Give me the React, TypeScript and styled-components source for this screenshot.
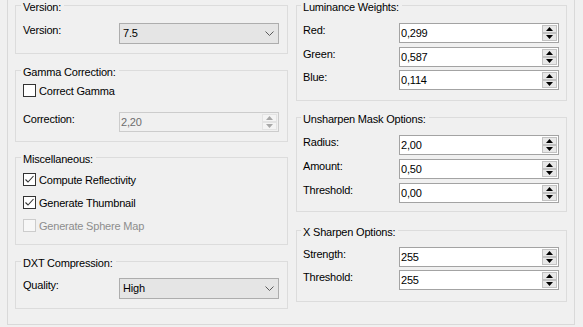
import React from 'react';
import styled, { createGlobalStyle } from 'styled-components';

const Global = createGlobalStyle`
  html, body { margin: 0; padding: 0; background: #f0f0f0; }
  body {
    font-family: "Liberation Sans", Arial, sans-serif;
    font-size: 11px;
    letter-spacing: -0.2px;
    color: #000;
  }
`;

const Page = styled.div`
  width: 583px;
  height: 327px;
  overflow: hidden;
  background: #f0f0f0;
`;

const Panel = styled.div`
  margin-left: 7px;
  width: 568px;
  height: 325px;
  box-sizing: border-box;
  border: 1px solid #d9d9d9;
  border-top: none;
  padding: 5px 7px 0 7px;
  display: grid;
  grid-template-columns: 273px 271px;
  column-gap: 8px;
  align-items: start;
`;

const Column = styled.div`
  display: flex;
  flex-direction: column;
`;

const Group = styled.section<{ $mt: number; $pb: number; $px: number }>`
  margin-top: ${p => p.$mt}px;
  border: 1px solid #dcdcdc;
  padding: 0 ${p => p.$px}px ${p => p.$pb}px;
  display: flex;
  flex-direction: column;
`;

const Legend = styled.div`
  align-self: flex-start;
  margin: -6px 0 0 -2px;
  padding: 0 3px 0 2px;
  background: #f0f0f0;
  height: 15px;
  line-height: 14px;
  white-space: nowrap;
`;

const Stack = styled.div<{ $mt: number; $gap: number }>`
  margin-top: ${p => p.$mt}px;
  display: flex;
  flex-direction: column;
  gap: ${p => p.$gap}px;
`;

const Row = styled.div`
  display: grid;
  grid-template-columns: 96px 160px;
  align-items: start;
`;

const Label = styled.div`
  line-height: 14px;
  white-space: nowrap;
`;

const Combo = styled.div`
  box-sizing: border-box;
  height: 21px;
  border: 1px solid #adadad;
  background: #e5e5e5;
  display: flex;
  align-items: center;
  justify-content: space-between;
  padding: 0 4px 0 3px;
  line-height: 19px;
`;

const SpinBox = styled.div<{ $disabled?: boolean }>`
  box-sizing: border-box;
  height: 20px;
  border: 1px solid ${p => (p.$disabled ? '#cccccc' : '#a3a3a3')};
  background: ${p => (p.$disabled ? '#f0f0f0' : '#ffffff')};
  color: ${p => (p.$disabled ? '#6d6d6d' : '#000')};
  display: flex;
  align-items: stretch;
`;

const SpinValue = styled.div`
  flex: 1;
  padding-left: 1px;
  line-height: 18px;
`;

const SpinButtons = styled.div`
  width: 15px;
  padding: 1px 1px 1px 0;
  display: flex;
  flex-direction: column;
`;

const SpinButton = styled.div<{ $disabled?: boolean }>`
  flex: 1;
  box-sizing: border-box;
  border: 1px solid ${p => (p.$disabled ? '#e3e3e3' : '#c2c2c2')};
  background: ${p => (p.$disabled ? '#f4f4f4' : '#e8e8e8')};
  display: flex;
  align-items: center;
  justify-content: center;
`;

const CheckRow = styled.div<{ $disabled?: boolean }>`
  height: 17px;
  display: flex;
  align-items: center;
  gap: 3px;
  line-height: 14px;
  color: ${p => (p.$disabled ? '#8d8d8d' : '#000')};
  white-space: nowrap;
`;

const Box = styled.div<{ $disabled?: boolean }>`
  box-sizing: border-box;
  width: 13px;
  height: 13px;
  border: 1px solid ${p => (p.$disabled ? '#cccccc' : '#333333')};
  background: ${p => (p.$disabled ? '#f7f7f7' : '#ffffff')};
  display: flex;
  align-items: center;
  justify-content: center;
`;

const Chevron = () => (
  <svg width="9" height="5" viewBox="0 0 9 5">
    <polyline points="0.5,0.5 4.5,4.5 8.5,0.5" fill="none" stroke="#5a5a5a" strokeWidth="1" />
  </svg>
);

const Arrow = ({ up, color }: { up?: boolean; color: string }) => (
  <svg width="7" height="4" viewBox="0 0 7 4">
    <polygon points={up ? '0,4 3.5,0 7,4' : '0,0 7,0 3.5,4'} fill={color} />
  </svg>
);

const Check = () => (
  <svg width="11" height="11" viewBox="0 0 11 11">
    <polyline points="1.5,5.5 4,8 9.5,2" fill="none" stroke="#333" strokeWidth="1.1" />
  </svg>
);

function Spin({ value, disabled }: { value: string; disabled?: boolean }) {
  const c = disabled ? '#a8a8a8' : '#000';
  return (
    <SpinBox $disabled={disabled}>
      <SpinValue>{value}</SpinValue>
      <SpinButtons>
        <SpinButton $disabled={disabled}><Arrow up color={c} /></SpinButton>
        <SpinButton $disabled={disabled}><Arrow color={c} /></SpinButton>
      </SpinButtons>
    </SpinBox>
  );
}

function CheckItem({ label, checked, disabled }: { label: string; checked?: boolean; disabled?: boolean }) {
  return (
    <CheckRow $disabled={disabled}>
      <Box $disabled={disabled}>{checked && <Check />}</Box>
      <span>{label}</span>
    </CheckRow>
  );
}

function SpinRow({ label, value, disabled }: { label: string; value: string; disabled?: boolean }) {
  return (
    <Row>
      <Label>{label}</Label>
      <Spin value={value} disabled={disabled} />
    </Row>
  );
}

function ComboRow({ label, value }: { label: string; value: string }) {
  return (
    <Row>
      <Label>{label}</Label>
      <Combo>
        <span>{value}</span>
        <Chevron />
      </Combo>
    </Row>
  );
}

export default function App() {
  return (
    <Page>
      <Global />
      <Panel>
        <Column>
          <Group $mt={0} $pb={9} $px={7}>
            <Legend>Version:</Legend>
            <Stack $mt={8} $gap={0}>
              <ComboRow label="Version:" value="7.5" />
            </Stack>
          </Group>
          <Group $mt={16} $pb={9} $px={7}>
            <Legend>Gamma Correction:</Legend>
            <Stack $mt={2} $gap={13}>
              <CheckItem label="Correct Gamma" />
              <SpinRow label="Correction:" value="2,20" disabled />
            </Stack>
          </Group>
          <Group $mt={15} $pb={10} $px={7}>
            <Legend>Miscellaneous:</Legend>
            <Stack $mt={4} $gap={6}>
              <CheckItem label="Compute Reflectivity" checked />
              <CheckItem label="Generate Thumbnail" checked />
              <CheckItem label="Generate Sphere Map" disabled />
            </Stack>
          </Group>
          <Group $mt={16} $pb={9} $px={7}>
            <Legend>DXT Compression:</Legend>
            <Stack $mt={7} $gap={0}>
              <ComboRow label="Quality:" value="High" />
            </Stack>
          </Group>
        </Column>
        <Column>
          <Group $mt={0} $pb={10} $px={6}>
            <Legend>Luminance Weights:</Legend>
            <Stack $mt={8} $gap={3.5}>
              <SpinRow label="Red:" value="0,299" />
              <SpinRow label="Green:" value="0,587" />
              <SpinRow label="Blue:" value="0,114" />
            </Stack>
          </Group>
          <Group $mt={16} $pb={8} $px={6}>
            <Legend>Unsharpen Mask Options:</Legend>
            <Stack $mt={8} $gap={4}>
              <SpinRow label="Radius:" value="2,00" />
              <SpinRow label="Amount:" value="0,50" />
              <SpinRow label="Threshold:" value="0,00" />
            </Stack>
          </Group>
          <Group $mt={18} $pb={11} $px={6}>
            <Legend>X Sharpen Options:</Legend>
            <Stack $mt={7} $gap={3}>
              <SpinRow label="Strength:" value="255" />
              <SpinRow label="Threshold:" value="255" />
            </Stack>
          </Group>
        </Column>
      </Panel>
    </Page>
  );
}
